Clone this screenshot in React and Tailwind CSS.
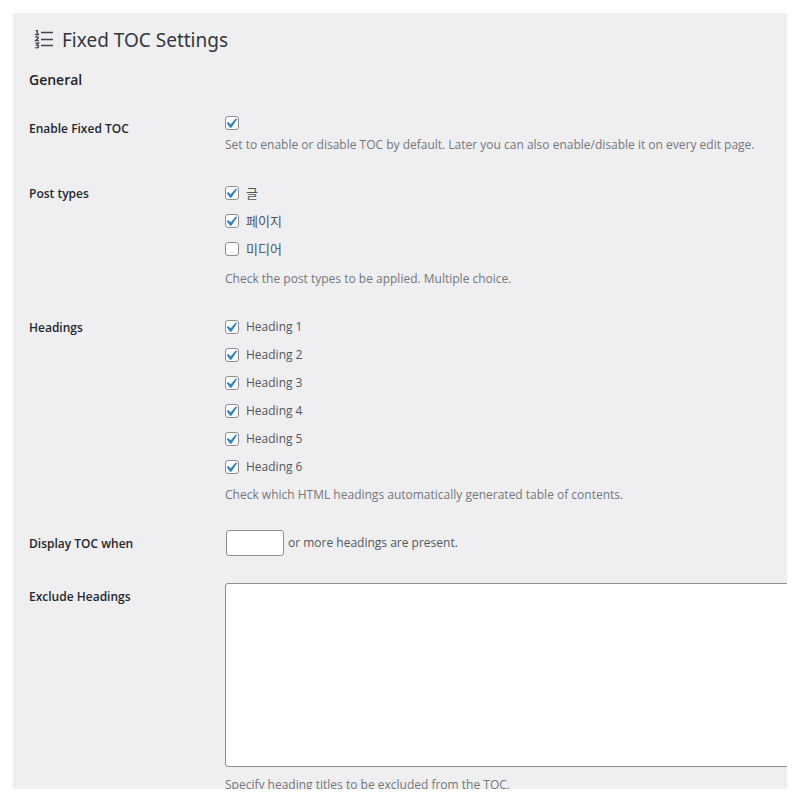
import { useState } from "react";

const POST_TYPES = [
  { id: "post", label: "글", checked: true },
  { id: "page", label: "페이지", checked: true },
  { id: "media", label: "미디어", checked: false },
];

const HEADINGS = [1, 2, 3, 4, 5, 6].map((level) => ({
  id: `h${level}`,
  label: `Heading ${level}`,
  checked: true,
}));

const OrderedListIcon = () => (
  <svg
    viewBox="0 0 20 20"
    className="size-5 shrink-0"
    fill="none"
    stroke="#3c434a"
    aria-hidden="true"
  >
    <path d="M7 2.5h12M7 9.5h12M7 15.5h12" strokeWidth="1.4" />
    <path
      d="M1.8.9 3.3 0v4.4M1.2 4.5h4M1.5 7.4c.6-1 3-.8 2.8.5-.1.9-1.8 1.5-2.8 2.8H4.8M1.4 13.2h3.2L2.8 15c2.6 0 2.4 3-.1 2.9-.6 0-1.1-.2-1.4-.5"
      strokeWidth="1.3"
    />
  </svg>
);

const Checkbox = ({ id, label, defaultChecked }) => {
  const [checked, setChecked] = useState(defaultChecked);

  return (
    <span className="grid size-[14px] shrink-0 place-items-center">
      <input
        type="checkbox"
        id={id}
        aria-label={label}
        checked={checked}
        onChange={(e) => setChecked(e.target.checked)}
        className="col-start-1 row-start-1 size-[14px] appearance-none rounded-[3px] border border-[#8c8f94] bg-white"
      />
      {checked && (
        <svg
          viewBox="5 3.5 12 12"
          className="pointer-events-none col-start-1 row-start-1 size-3"
          fill="#3582c4"
          aria-hidden="true"
        >
          <path d="M14.83 4.89l1.34.94-5.81 8.38H9.02L5.78 9.67l1.34-1.25 2.57 2.4z" />
        </svg>
      )}
    </span>
  );
};

const CheckboxList = ({ items, className }) => (
  <ul className={`pt-px ${className ?? ""}`}>
    {items.map((item) => (
      <li key={item.id} className="flex h-7 items-center">
        <Checkbox id={item.id} defaultChecked={item.checked} />
        <label htmlFor={item.id} className="pl-[7px]">
          {item.label}
        </label>
      </li>
    ))}
  </ul>
);

const Help = ({ children }) => <p className="text-[#72777c]">{children}</p>;

const Row = ({ title, htmlFor, children }) => (
  <div className="grid grid-cols-[196px_minmax(0,1fr)]">
    <div className="pt-1.5 font-semibold text-[#23282d]">
      {htmlFor ? <label htmlFor={htmlFor}>{title}</label> : title}
    </div>
    <div role="group" aria-label={title}>
      {children}
    </div>
  </div>
);

const App = () => (
  <div className="h-screen bg-white p-[13px] font-['Open_Sans','Noto_Sans_CJK_KR',sans-serif] text-[12px] leading-5 text-[#50575e]">
    <main className="h-full overflow-hidden bg-[#efeff1] pt-[13px] pl-4">
      <h1 className="flex items-center gap-2 pl-[5px] font-['Noto_Sans',sans-serif] text-[19px] leading-7 font-normal text-[#32373c]">
        <OrderedListIcon />
        Fixed TOC Settings
      </h1>
      <h2 className="mt-4 text-[14px] leading-5 font-semibold text-[#1d2327]">
        General
      </h2>

      <form className="mt-[23px] flex flex-col gap-[23px]">
        <Row title="Enable Fixed TOC" htmlFor="enable">
          <div className="flex h-5 items-center">
            <Checkbox id="enable" defaultChecked />
          </div>
          <div className="pt-0.5">
            <Help>
              Set to enable or disable TOC by default. Later you can also
              enable/disable it on every edit page.
            </Help>
          </div>
        </Row>

        <Row title="Post types">
          <CheckboxList
            items={POST_TYPES}
            className="font-['Noto_Sans_CJK_KR',sans-serif] text-[13px]"
          />
          <div className="pt-1.5">
            <Help>Check the post types to be applied. Multiple choice.</Help>
          </div>
        </Row>

        <Row title="Headings">
          <CheckboxList items={HEADINGS} />
          <div className="pt-1">
            <Help>
              Check which HTML headings automatically generated table of
              contents.
            </Help>
          </div>
        </Row>

        <Row title="Display TOC when" htmlFor="minimum">
          <div className="flex items-center gap-1 py-0.5">
            <input
              type="text"
              id="minimum"
              className="ml-px h-[26px] w-[58px] rounded-[3px] border border-[#8c8f94] bg-white px-2"
            />
            <span>or more headings are present.</span>
          </div>
        </Row>

        <Row title="Exclude Headings" htmlFor="exclude">
          {/* the field runs on past the right edge of the panel */}
          <textarea
            id="exclude"
            className="mt-0.5 block h-[184px] w-[calc(100%+16px)] resize-none rounded-[3px] border border-[#8c8f94] bg-white px-2 py-1"
          />
          <div className="pt-2">
            <Help>Specify heading titles to be excluded from the TOC.</Help>
          </div>
        </Row>
      </form>
    </main>
  </div>
);

export default App;
